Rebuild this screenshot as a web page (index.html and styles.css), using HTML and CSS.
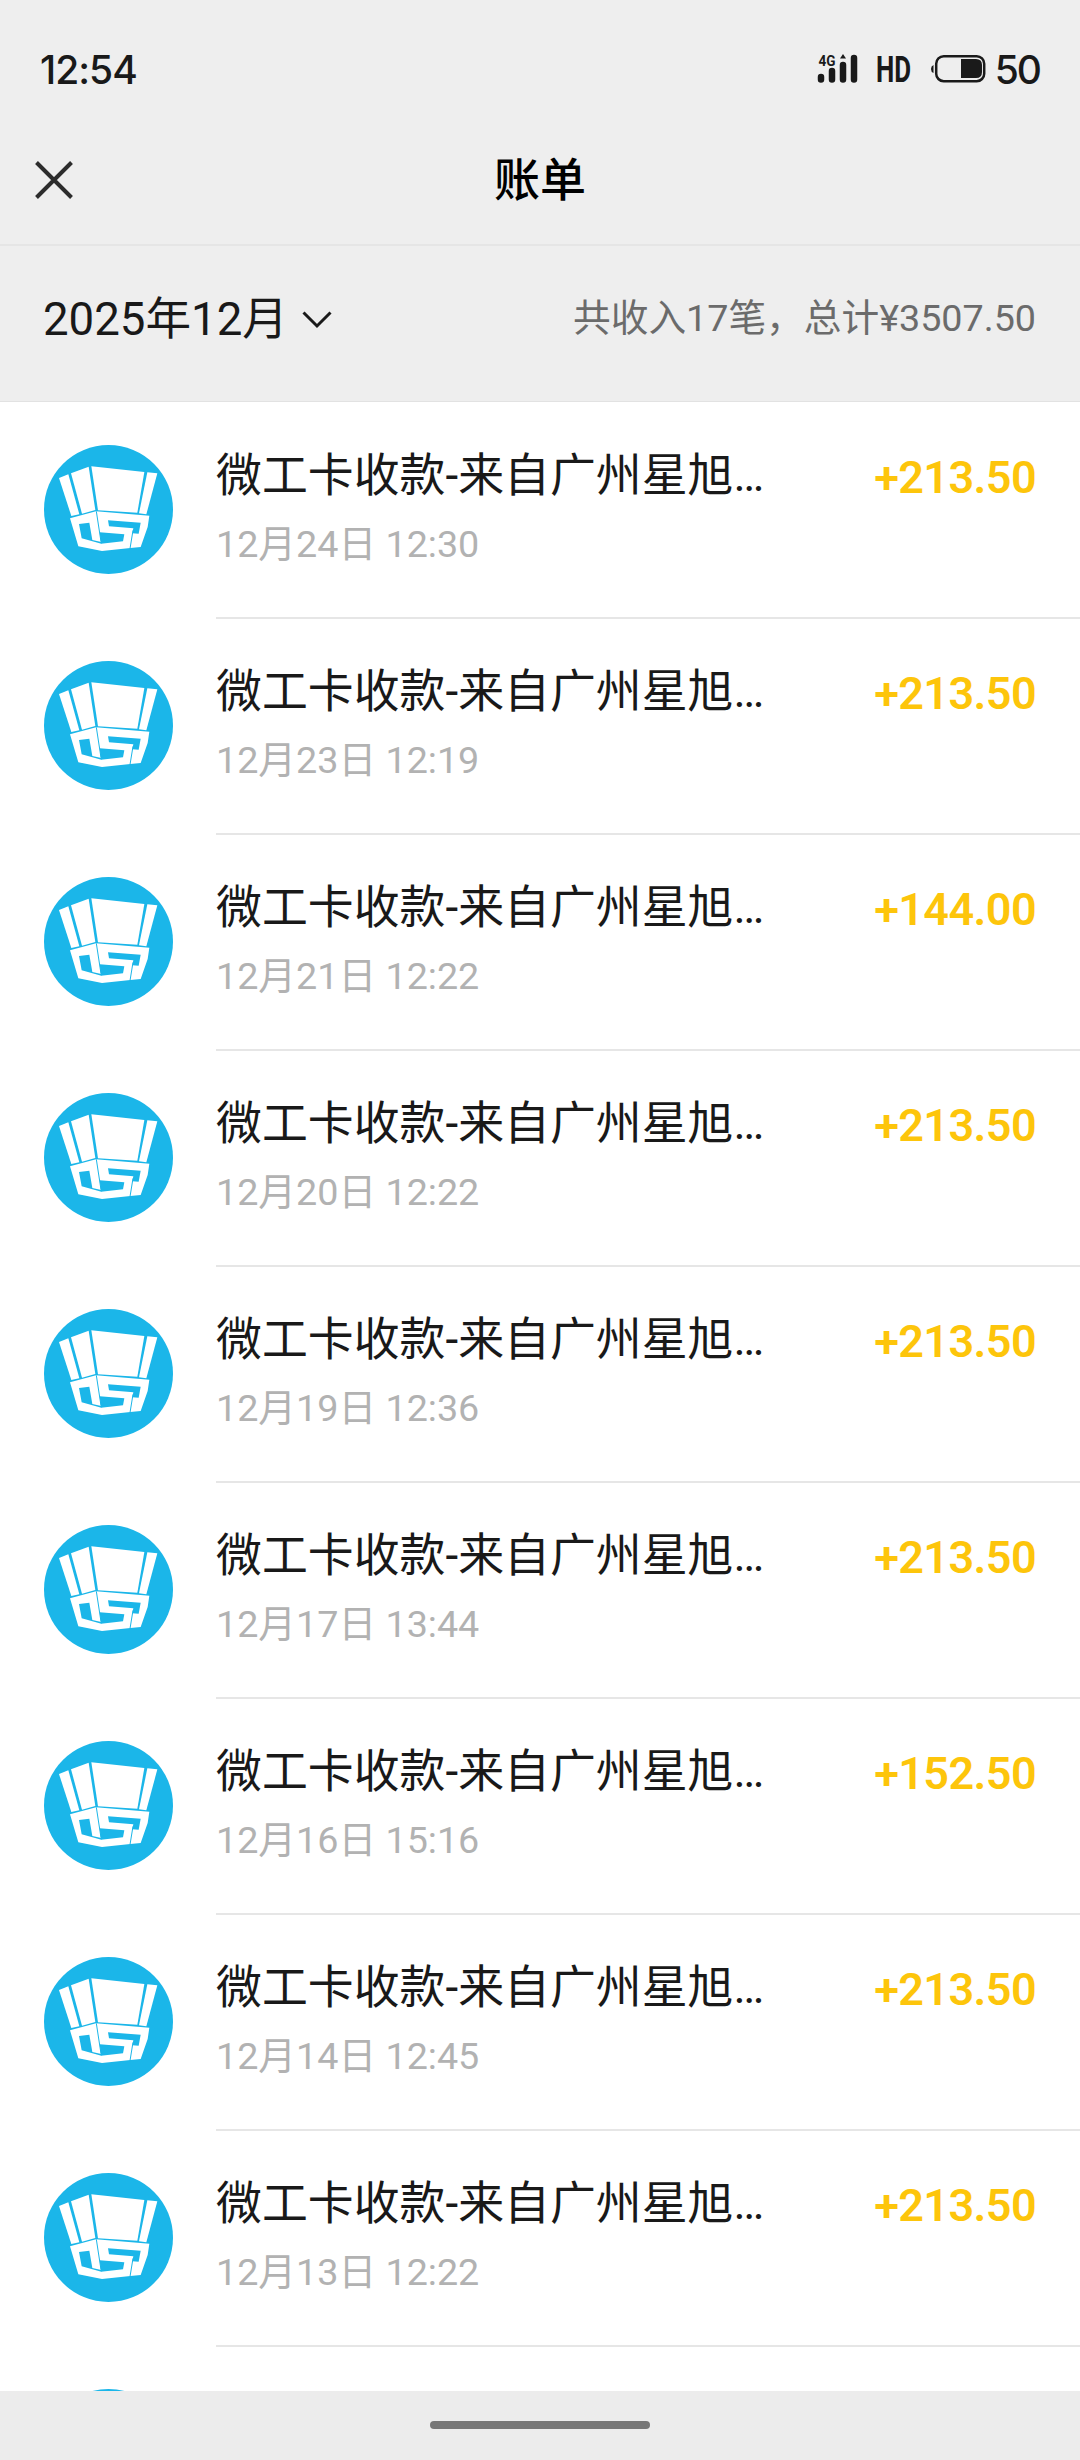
FILE: index.html
```html
<!DOCTYPE html>
<html lang="zh-CN">
<head>
<meta charset="utf-8">
<title>账单</title>
<link rel="stylesheet" href="styles.css">
</head>
<body>
<svg class="defs" width="0" height="0" aria-hidden="true">
  <symbol id="logo" viewBox="42 44 387 387">
    <ellipse cx="235.5" cy="237.500" rx="193.500" ry="193.500" fill="#1bb6e9"/>
    <g fill="#fff">
      <path d="M87 143L115 132L148 252L124 257Z"/>
      <path d="M123 129L176 109L196 239L156 250Z"/>
      <path d="M184 108L343 125L322 247L204 240Z"/>
      <path d="M352 126L382 129L349 252L327 249Z"/>
      <path d="M120 264L198 243L358 256L353 290L332 350L301 353L216 362L145 348Z"/>
    </g>
    <g fill="#1bb6e9">
      <path d="M147 281L178 277L187 329L214 335L214 340L155 324Z"/>
      <path d="M234 270L332 277L326 310L307 309L310 294L237 288Z"/>
      <path d="M209 306L283 312L279 333L213 340Z"/>
    </g>
    <path d="M199 243L213 334M309 300L300 355" fill="none" stroke="#1bb6e9" stroke-width="3"/>
  </symbol>
</svg>
<div class="screen">
  <header class="top">
    <div class="status">
      <span class="clock">12:54</span>
      <div class="status-icons">
        <svg class="signal" width="42" height="32" viewBox="0 0 42 32">
          <g stroke="#1a1a1a" stroke-width="6.500" stroke-linecap="round">
            <path d="M4 24V26.500M15 18V26.500M26 12V26.500M37 5V26.500"/>
          </g>
          <path d="M23 5.500L26 1L29 5.500Z" fill="#1a1a1a"/>
          <text x="1.500" y="12.500" class="net" textLength="17" lengthAdjust="spacingAndGlyphs">4G</text>
        </svg>
        <span class="hd">HD</span>
        <svg class="battery" width="56" height="30" viewBox="0 0 56 30">
          <rect x="6.200" y="2.200" width="48" height="25" rx="7.500" fill="none" stroke="#1a1a1a" stroke-width="2.500"/>
          <path d="M31 5H46Q52 5 52 11V18Q52 24 46 24H31Z" fill="#1a1a1a"/>
          <path d="M3.500 11V19Q1 18 1 15Q1 12 3.500 11Z" fill="#1a1a1a"/>
        </svg>
        <span class="level">50</span>
      </div>
    </div>
    <div class="nav">
      <svg class="close" width="38" height="38" viewBox="0 0 38 38"><path d="M1.500 1.500L36.500 36.500M36.500 1.500L1.500 36.500" stroke="#2c2c2c" stroke-width="4"/></svg>
      <h1>账单</h1>
    </div>
  </header>
  <section class="summary">
    <div class="month">2025年12月<svg width="30" height="18" viewBox="0 0 30 18"><path d="M1.500 1.500L15 15L28.500 1.500" fill="none" stroke="#1a1a1a" stroke-width="3"/></svg></div>
    <div class="total">共收入17笔，总计¥3507.50</div>
  </section>
  <main class="list">
    <div class="row"><svg class="avatar"><use href="#logo"/></svg><div class="body"><div class="info"><div class="name">微工卡收款-来自广州星旭…</div><div class="time">12月24日 12:30</div></div><div class="amount">+213.50</div></div></div>
    <div class="row"><svg class="avatar"><use href="#logo"/></svg><div class="body"><div class="info"><div class="name">微工卡收款-来自广州星旭…</div><div class="time">12月23日 12:19</div></div><div class="amount">+213.50</div></div></div>
    <div class="row"><svg class="avatar"><use href="#logo"/></svg><div class="body"><div class="info"><div class="name">微工卡收款-来自广州星旭…</div><div class="time">12月21日 12:22</div></div><div class="amount">+144.00</div></div></div>
    <div class="row"><svg class="avatar"><use href="#logo"/></svg><div class="body"><div class="info"><div class="name">微工卡收款-来自广州星旭…</div><div class="time">12月20日 12:22</div></div><div class="amount">+213.50</div></div></div>
    <div class="row"><svg class="avatar"><use href="#logo"/></svg><div class="body"><div class="info"><div class="name">微工卡收款-来自广州星旭…</div><div class="time">12月19日 12:36</div></div><div class="amount">+213.50</div></div></div>
    <div class="row"><svg class="avatar"><use href="#logo"/></svg><div class="body"><div class="info"><div class="name">微工卡收款-来自广州星旭…</div><div class="time">12月17日 13:44</div></div><div class="amount">+213.50</div></div></div>
    <div class="row"><svg class="avatar"><use href="#logo"/></svg><div class="body"><div class="info"><div class="name">微工卡收款-来自广州星旭…</div><div class="time">12月16日 15:16</div></div><div class="amount">+152.50</div></div></div>
    <div class="row"><svg class="avatar"><use href="#logo"/></svg><div class="body"><div class="info"><div class="name">微工卡收款-来自广州星旭…</div><div class="time">12月14日 12:45</div></div><div class="amount">+213.50</div></div></div>
    <div class="row"><svg class="avatar"><use href="#logo"/></svg><div class="body"><div class="info"><div class="name">微工卡收款-来自广州星旭…</div><div class="time">12月13日 12:22</div></div><div class="amount">+213.50</div></div></div>
    <div class="row"><svg class="avatar"><use href="#logo"/></svg></div>
  </main>
  <footer class="homebar"><div class="pill"></div></footer>
</div>
</body>
</html>
```
FILE: styles.css
```css
* { box-sizing: border-box; }
body {
  margin: 0;
  font-family: Roboto, "Noto Sans CJK SC", sans-serif;
  color: #191919;
  background: #fff;
}
svg { display: block; flex: none; }
.defs { height: 0; }
.screen {
  width: 1080px;
  height: 2460px;
  display: flex;
  flex-direction: column;
  overflow: hidden;
}
.top {
  height: 246px;
  flex: none;
  background: #eee;
  border-bottom: 2px solid #e5e5e5;
}
.status {
  height: 140px;
  padding: 0 40px 0 40px;
  display: flex;
  align-items: center;
  justify-content: space-between;
  font-family: Inter, sans-serif;
  font-weight: 500;
}
.clock { font-size: 39px; line-height: 48px; letter-spacing: -1px; }
.status-icons { display: flex; align-items: center; }
.signal { margin-right: 17px; margin-top: -3px; }
.net { font-family: Roboto, sans-serif; font-weight: 700; font-size: 15px; fill: #1a1a1a; }
.hd { font-family: Roboto, sans-serif; font-weight: 700; font-size: 36px; line-height: 40px; width: 54px; transform: scaleX(0.72); transform-origin: left; }
.battery { margin-top: -2px; }
.level { font-size: 39px; line-height: 48px; margin-left: 9px; letter-spacing: -2px; }
.nav {
  height: 80px;
  padding: 0 35px;
  display: grid;
  grid-template-columns: 38px 1fr 38px;
  align-items: center;
}
h1 {
  margin: 0;
  text-align: center;
  font-size: 46px;
  line-height: 60px;
  font-weight: 500;
  color: #000;
}
.summary {
  height: 156px;
  flex: none;
  padding: 0 44px 7px 43px;
  display: flex;
  align-items: center;
  justify-content: space-between;
  background: #eee;
  border-bottom: 1px solid #e2e2e2;
}
.month { display: flex; align-items: center; gap: 14px; font-size: 45.6px; line-height: 60px; }
.total { padding-bottom: 4px; font-size: 37.7px; line-height: 60px; color: #6b6b6b; }
.list { flex: 1; overflow: hidden; }
.row { height: 216px; padding-left: 44px; display: flex; gap: 43px; }
.avatar { width: 129px; height: 129px; margin-top: 42.5px; }
.body {
  flex: 1;
  height: 217px;
  padding: 41px 44px 0 0;
  display: flex;
  justify-content: space-between;
  border-bottom: 2px solid #e6e6e6;
}
.name { font-size: 45.9px; line-height: 64px; white-space: nowrap; }
.time { margin-top: 11px; font-size: 37.7px; line-height: 52px; color: #b2b2b2; }
.amount { padding-top: 1px; font-size: 45px; line-height: 68px; font-weight: 600; letter-spacing: -0.6px; color: #fdc50b; }
.homebar {
  height: 69px;
  flex: none;
  padding-top: 30px;
  display: flex;
  justify-content: center;
  background: #ececec;
}
.pill { width: 220px; height: 8px; border-radius: 4px; background: #777; }
```
